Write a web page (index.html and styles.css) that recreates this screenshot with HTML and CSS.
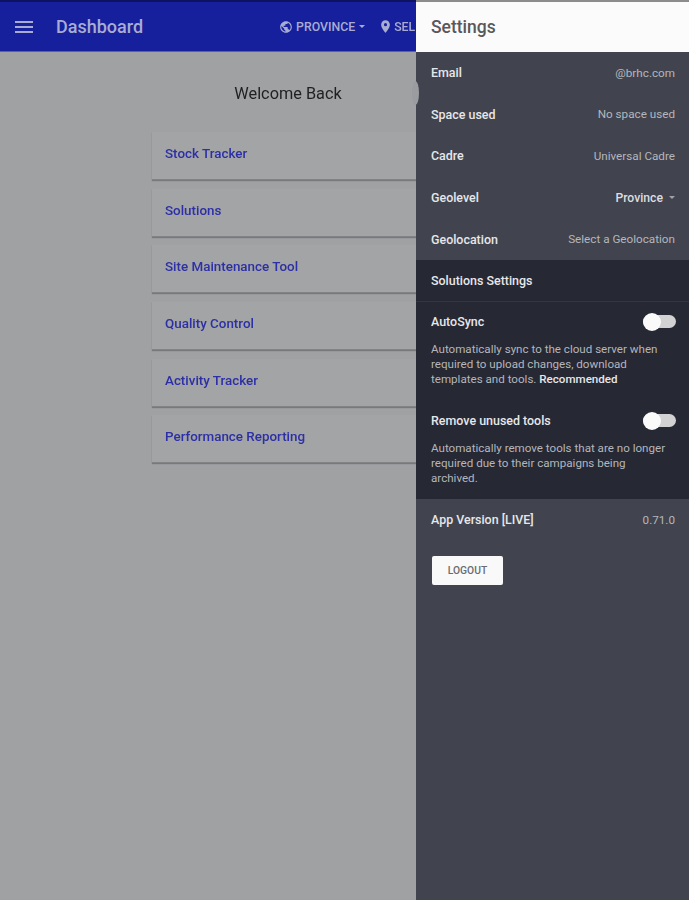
FILE: index.html
```html
<!DOCTYPE html>
<html lang="en">

<head>
    <meta charset="UTF-8">
    <meta name="viewport" content="width=device-width, initial-scale=1.0">
    <title>Dashboard</title>
    <link rel="stylesheet" href="styles.css">
</head>

<body>
    <header class="topbar">
        <svg class="menu-icon" viewBox="0 0 24 24"><path d="M3 18h18v-2H3v2zm0-5h18v-2H3v2zm0-7v2h18V6H3z"/></svg>
        <span class="topbar-title">Dashboard</span>
        <div class="topbar-actions">
            <svg class="globe-icon" viewBox="0 0 24 24"><path d="M12 2C6.48 2 2 6.48 2 12s4.48 10 10 10 10-4.48 10-10S17.52 2 12 2zm-1 17.93c-3.95-.49-7-3.85-7-7.93 0-.62.08-1.21.21-1.79L9 15v1c0 1.1.9 2 2 2v1.93zm6.9-2.54c-.26-.81-1-1.39-1.9-1.39h-1v-3c0-.55-.45-1-1-1H8v-2h2c.55 0 1-.45 1-1V7h2c1.1 0 2-.9 2-2v-.41c2.93 1.19 5 4.06 5 7.41 0 2.08-.8 3.97-2.1 5.39z"/></svg>
            <span>PROVINCE</span>
            <span class="caret"></span>
            <svg class="pin-icon" viewBox="0 0 24 24"><path d="M12 2C8.13 2 5 5.13 5 9c0 5.25 7 13 7 13s7-7.75 7-13c0-3.87-3.13-7-7-7zm0 9.5a2.5 2.5 0 0 1 0-5 2.5 2.5 0 0 1 0 5z"/></svg>
            <span>SEL</span>
        </div>
    </header>

    <main class="content">
        <h1 class="welcome">Welcome Back</h1>
        <a class="card">Stock Tracker</a>
        <a class="card">Solutions</a>
        <a class="card">Site Maintenance Tool</a>
        <a class="card">Quality Control</a>
        <a class="card">Activity Tracker</a>
        <a class="card">Performance Reporting</a>
    </main>

    <aside class="drawer">
        <span class="drawer-bump"></span>
        <div class="drawer-head">Settings</div>

        <div class="row"><span class="row-label">Email</span><span class="row-value">@brhc.com</span></div>
        <div class="row"><span class="row-label">Space used</span><span class="row-value">No space used</span></div>
        <div class="row"><span class="row-label">Cadre</span><span class="row-value">Universal Cadre</span></div>
        <div class="row">
            <span class="row-label">Geolevel</span>
            <span class="row-value row-select">Province<span class="caret caret-small"></span></span>
        </div>
        <div class="row"><span class="row-label">Geolocation</span><span class="row-value">Select a Geolocation</span></div>

        <section class="solutions">
            <div class="solutions-head">Solutions Settings</div>

            <div class="toggle-head toggle-first">
                <span class="row-label">AutoSync</span>
                <span class="toggle"><span class="toggle-knob"></span></span>
            </div>
            <p class="toggle-desc">Automatically sync to the cloud server when required to upload changes, download templates and tools. <b>Recommended</b></p>

            <div class="toggle-head">
                <span class="row-label">Remove unused tools</span>
                <span class="toggle"><span class="toggle-knob"></span></span>
            </div>
            <p class="toggle-desc">Automatically remove tools that are no longer required due to their campaigns being archived.</p>
        </section>

        <div class="row"><span class="row-label">App Version [LIVE]</span><span class="row-value">0.71.0</span></div>
        <button class="logout">LOGOUT</button>
    </aside>
</body>

</html>
```

FILE: styles.css
```css
html,
body {
    height: 100%;
}

body {
    margin: 0;
    height: 900px;
    overflow: hidden;
    position: relative;
    background-color: #9fa1a3;
    font-family: Roboto, sans-serif;
    filter: blur(0.5px);
}

.topbar {
    display: flex;
    align-items: center;
    box-sizing: border-box;
    height: 52px;
    padding: 0 0 0 12px;
    background-color: #17209c;
    border-top: 2px solid #0e1260;
    border-bottom: 1px solid #5a60a8;
    color: #a9acd2;
}

.menu-icon {
    width: 24px;
    height: 24px;
    fill: currentColor;
}

.topbar-title {
    margin-left: 20px;
    font-size: 18px;
    font-weight: 500;
}

.topbar-actions {
    display: flex;
    align-items: center;
    margin-left: 136px;
    font-size: 12.3px;
    font-weight: 500;
    white-space: nowrap;
}

.globe-icon {
    width: 14px;
    height: 14px;
    margin-right: 3px;
    fill: currentColor;
}

.pin-icon {
    width: 15px;
    height: 15px;
    margin: 0 1px 0 13px;
    fill: currentColor;
}

.caret {
    width: 0;
    height: 0;
    margin-left: 4px;
    border-left: 3.5px solid transparent;
    border-right: 3.5px solid transparent;
    border-top: 3.5px solid currentColor;
}

.content {
    width: 272px;
    margin-left: 152px;
}

.welcome {
    margin: 0;
    padding: 31px 0 28px;
    font-size: 16.3px;
    line-height: 21px;
    font-weight: 400;
    text-align: center;
    color: #1f2022;
}

.card {
    display: flex;
    align-items: center;
    box-sizing: border-box;
    height: 48px;
    margin-bottom: 8.7px;
    padding: 0 13px 4px;
    background-color: #a3a4a5;
    border-bottom: 1px solid #828385;
    box-shadow: 0 1px 1px #78797b;
    font-size: 13.4px;
    font-weight: 500;
    color: #2c2fa6;
}

.drawer {
    position: absolute;
    top: 0;
    left: 416px;
    width: 273px;
    height: 900px;
    background-color: #41444f;
    color: #e8e9ec;
    font-size: 12.45px;
}

.drawer-bump {
    position: absolute;
    top: 81px;
    left: -4px;
    width: 7px;
    height: 24px;
    border-radius: 50%;
    background-color: #9a9c9f;
}

.drawer-head {
    position: relative;
    display: flex;
    align-items: center;
    box-sizing: border-box;
    height: 52px;
    padding: 0 15px;
    background-color: #fbfbfb;
    border-top: 2px solid #8c8c8c;
    font-size: 17.5px;
    font-weight: 500;
    color: #58585a;
}

.row {
    display: flex;
    justify-content: space-between;
    align-items: center;
    height: 41.6px;
    padding: 0 14px 0 15px;
}

.row-label {
    font-weight: 500;
    color: #e6e7ea;
}

.row-value {
    color: #b4b6bc;
    font-size: 11.7px;
}

.row-select {
    display: flex;
    align-items: center;
    font-size: 12.2px;
    font-weight: 500;
    color: #dcdde0;
}

.caret-small {
    margin-left: 6px;
    color: #a0a2a8;
}

.solutions {
    padding-bottom: 13px;
    background-color: #262833;
}

.solutions-head {
    display: flex;
    align-items: center;
    height: 41px;
    padding: 0 15px;
    border-bottom: 1px solid #34363f;
    font-weight: 500;
    color: #e6e7ea;
}

.toggle-head {
    display: flex;
    justify-content: space-between;
    align-items: center;
    height: 20px;
    margin-top: 24px;
    padding: 0 13px 0 15px;
}

.toggle-first {
    margin-top: 10px;
}

.toggle {
    position: relative;
    width: 33px;
    height: 13px;
    border-radius: 7px;
    background-color: #d2d2d2;
}

.toggle-knob {
    position: absolute;
    top: -2px;
    left: 0;
    width: 18px;
    height: 18px;
    border-radius: 50%;
    background-color: #fafafa;
}

.toggle-desc {
    margin: 10px 0 0;
    padding: 0 20px 0 15px;
    font-size: 11.6px;
    line-height: 15px;
    color: #b5b6bc;
}

.toggle-desc b {
    font-weight: 500;
    color: #e6e7ea;
}

.logout {
    display: block;
    width: 71px;
    height: 29px;
    margin: 15px 0 0 16px;
    padding: 0;
    border: none;
    border-radius: 2px;
    background-color: #f9f9fa;
    font-family: Roboto, sans-serif;
    font-size: 10.3px;
    font-weight: 500;
    color: #6a6b6f;
}
```
